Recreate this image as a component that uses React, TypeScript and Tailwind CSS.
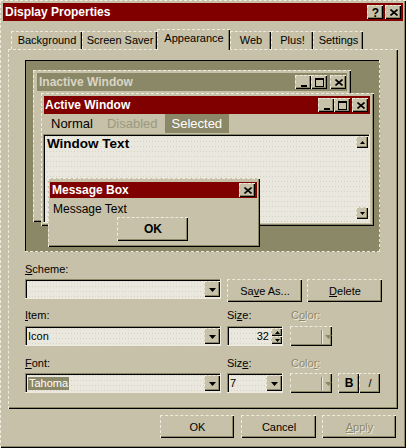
import type { ReactNode } from "react"

const FACE = "bg-[#c6c1a8]"
const RAISED =
  "border-t border-l border-dashed border-[#eeebdc] shadow-[inset_-1px_-1px_0_#000,inset_-2px_-2px_0_#8b8868]"
const SUNKEN =
  "border-r border-b border-dashed border-[#eeebdc] shadow-[inset_1px_1px_0_#8b8868,inset_2px_2px_0_#000]"
const FIELD =
  "bg-[#eae8de] bg-[radial-gradient(circle,#d6d3c2_0.6px,transparent_0.9px)] bg-[length:3px_5px]"

const tabs = [
  { label: "Background", w: "w-[71px]" },
  { label: "Screen Saver", w: "w-[75px]" },
  { label: "Appearance", w: "w-[73px]", active: true },
  { label: "Web", w: "w-[41px]" },
  { label: "Plus!", w: "w-[42px]" },
  { label: "Settings", w: "w-[50px]" },
]

function CloseGlyph() {
  return (
    <svg width="8" height="7" viewBox="0 0 8 7">
      <path d="M0.5 0.5l7 6M7.5 0.5l-7 6" stroke="#000" strokeWidth="1.6" />
    </svg>
  )
}

function MinGlyph() {
  return (
    <svg width="8" height="9" viewBox="0 0 8 9">
      <rect x="1" y="7" width="6" height="2" />
    </svg>
  )
}

function MaxGlyph() {
  return (
    <svg width="9" height="9" viewBox="0 0 9 9">
      <rect x="0.5" y="0.5" width="8" height="8" fill="none" stroke="#000" />
      <rect width="9" height="2" />
    </svg>
  )
}

function Arrow({ up, color = "#000", small }: { up?: boolean; color?: string; small?: boolean }) {
  if (small) {
    return (
      <svg width="5" height="3" viewBox="0 0 5 3">
        <path d={up ? "M0 3h5L2.5 0z" : "M0 0h5L2.5 3z"} fill={color} />
      </svg>
    )
  }
  return (
    <svg width="7" height="4" viewBox="0 0 7 4">
      <path d={up ? "M0 4h7L3.5 0z" : "M0 0h7L3.5 4z"} fill={color} />
    </svg>
  )
}

function CapBtn({ children }: { children: ReactNode }) {
  return (
    <div className={`w-4 h-[14px] ${FACE} ${RAISED} flex items-center justify-center`}>
      {children}
    </div>
  )
}

function ArrowBtn() {
  return (
    <div className={`w-4 h-4 ${FACE} ${RAISED} flex items-center justify-center`}>
      <Arrow />
    </div>
  )
}

function Combo({ className, children }: { className: string; children?: ReactNode }) {
  return (
    <div className={`${className} h-5 ${SUNKEN} ${FIELD} flex items-start pt-[2px]`}>
      <div className="flex-1 h-4 flex items-center pl-[3px] leading-[13px]">{children}</div>
      <ArrowBtn />
    </div>
  )
}

function ColorBtn() {
  return (
    <div className={`w-[42px] h-5 ml-[7px] ${FACE} ${RAISED} flex items-center`}>
      <div className="w-[30px]" />
      <div className="w-px h-[14px] bg-[#8b8868] shadow-[1px_0_0_#eeebdc]" />
      <div className="ml-[3px] flex items-center">
        <Arrow color="#8b8868" />
      </div>
    </div>
  )
}

function Btn({ className, children }: { className: string; children: ReactNode }) {
  return (
    <div className={`${className} ${FACE} ${RAISED} flex items-center justify-center leading-[13px]`}>
      {children}
    </div>
  )
}

function U({ children }: { children: ReactNode }) {
  return <span className="underline underline-offset-[1px]">{children}</span>
}

export default function App() {
  return (
    <div
      className={`w-[406px] h-[448px] ${FACE} ${RAISED} pt-[2px] pl-[2px] pr-[3px] pb-[3px] flex flex-col font-['Liberation_Sans',Arial,sans-serif] text-[11px] text-black`}
    >
      {/* title bar */}
      <div className="h-[18px] bg-[#800000] flex items-center justify-between pl-[2px] pr-[2px]">
        <span className="text-white font-bold text-[12px] leading-none">Display Properties</span>
        <div className="flex gap-[2px]">
          <CapBtn>
            <span className="font-bold text-[12px] leading-none">?</span>
          </CapBtn>
          <CapBtn>
            <CloseGlyph />
          </CapBtn>
        </div>
      </div>

      {/* tabs */}
      <div className="mt-2 h-5 pl-2 flex items-start relative z-10">
        {tabs.map((t) =>
          t.active ? (
            <div
              key={t.label}
              className={`${t.w} h-[21px] pb-[3px] ${FACE} border-t border-l border-dashed border-[#eeebdc] shadow-[inset_-1px_0_0_#000,inset_-2px_0_0_#8b8868] flex items-center justify-center leading-[13px]`}
            >
              {t.label}
            </div>
          ) : (
            <div
              key={t.label}
              className={`${t.w} mt-[2px] h-[18px] ${FACE} border-t border-l border-dashed border-[#eeebdc] shadow-[inset_-1px_0_0_#000,inset_-2px_0_0_#8b8868] flex items-center justify-center leading-[13px]`}
            >
              {t.label}
            </div>
          )
        )}
      </div>

      {/* tab panel */}
      <div className={`ml-[5px] w-[390px] h-[360px] ${RAISED} pl-4 pt-[10px] flex flex-col`}>
        {/* preview */}
        <div className="w-[355px] h-[192px] relative bg-[#8b8868] shadow-[inset_1px_1px_0_#000] border-r border-b border-dashed border-[#eeebdc]">
          {/* inactive window */}
          <div className={`absolute left-2 top-[10px] w-[318px] h-[152px] ${FACE} ${RAISED} pt-[2px] pl-[3px] pr-1`}>
            <div className="h-[18px] bg-[#8b8868] flex items-center justify-between pl-[2px] pr-px">
              <span className="text-[#d9d5c3] font-bold text-[12px] leading-none">Inactive Window</span>
              <div className="flex">
                <CapBtn>
                  <MinGlyph />
                </CapBtn>
                <CapBtn>
                  <MaxGlyph />
                </CapBtn>
                <div className="ml-[3px]">
                  <CapBtn>
                    <CloseGlyph />
                  </CapBtn>
                </div>
              </div>
            </div>
          </div>

          {/* active window */}
          <div className={`absolute left-4 top-[33px] w-[333px] h-[133px] ${FACE} ${RAISED} pt-[2px] pl-[2px] pr-1 flex flex-col`}>
            <div className="h-[18px] bg-[#800000] flex items-center justify-between pl-[1px] pr-[2px]">
              <span className="text-white font-bold text-[12px] leading-none">Active Window</span>
              <div className="flex">
                <CapBtn>
                  <MinGlyph />
                </CapBtn>
                <CapBtn>
                  <MaxGlyph />
                </CapBtn>
                <div className="ml-[2px]">
                  <CapBtn>
                    <CloseGlyph />
                  </CapBtn>
                </div>
              </div>
            </div>
            <div className="h-[19px] flex items-stretch text-[13px] leading-[19px]">
              <div className="px-[7px]">Normal</div>
              <div className="px-[7px] text-[#9c997f]">Disabled</div>
              <div className="px-[7px] bg-[#8b8868] text-white">Selected</div>
            </div>
            <div className={`-ml-px mt-px w-[327px] h-[89px] ${SUNKEN} ${FIELD} flex pt-[2px] pb-[3px] pl-1 pr-px`}>
              <div className="flex-1 font-bold text-[13.5px] leading-[16px]">Window Text</div>
              <div className="w-3 flex flex-col justify-between">
                <div className={`w-3 h-3 ${FACE} ${RAISED} flex items-center justify-center`}>
                  <Arrow up small />
                </div>
                <div className={`w-3 h-3 ${FACE} ${RAISED} flex items-center justify-center`}>
                  <Arrow small />
                </div>
              </div>
            </div>
          </div>

          {/* message box */}
          <div className={`absolute left-[23px] top-[118px] w-[212px] h-[69px] ${FACE} ${RAISED} pt-[3px] pl-px pr-[3px] flex flex-col`}>
            <div className="h-4 bg-[#800000] flex items-center justify-between pl-[2px] pr-[2px]">
              <span className="text-white font-bold text-[12px] leading-none">Message Box</span>
              <CapBtn>
                <CloseGlyph />
              </CapBtn>
            </div>
            <div className="mt-[4px] pl-[3px] text-[12px] leading-[14px]">Message Text</div>
            <Btn className="ml-[67px] mt-px w-[71px] h-6 font-bold text-[12px]">OK</Btn>
          </div>
        </div>

        {/* scheme */}
        <div className="mt-[11px] h-[13px] leading-[13px]">
          <U>S</U>cheme:
        </div>
        <div className="mt-[3px] flex items-start">
          <Combo className="w-[196px]" />
          <Btn className="ml-[6px] w-[75px] h-[23px]">
            Sa<U>v</U>e As...
          </Btn>
          <Btn className="ml-[5px] w-[75px] h-[23px]">
            <U>D</U>elete
          </Btn>
        </div>

        {/* item */}
        <div className="mt-[7px] h-[13px] leading-[13px] flex">
          <div className="w-[202px]">
            <U>I</U>tem:
          </div>
          <div className="w-[64px]">
            Si<U>z</U>e:
          </div>
          <div className="text-[#8b8868] [text-shadow:1px_1px_0_#eeebdc]">
            C<U>o</U>lor:
          </div>
        </div>
        <div className="mt-1 flex items-start">
          <Combo className="w-[196px]">Icon</Combo>
          <div className={`ml-[6px] w-[56px] h-5 ${SUNKEN} ${FIELD} flex items-start pt-[2px]`}>
            <div className="flex-1 h-4 flex items-center justify-end pr-[2px] leading-[13px]">32</div>
            <div className="w-[11px] flex flex-col">
              <div className={`h-2 ${FACE} ${RAISED} flex items-center justify-center`}>
                <Arrow up small />
              </div>
              <div className={`h-2 ${FACE} ${RAISED} flex items-center justify-center`}>
                <Arrow small />
              </div>
            </div>
          </div>
          <ColorBtn />
        </div>

        {/* font */}
        <div className="mt-[11px] h-[13px] leading-[13px] flex">
          <div className="w-[202px]">
            <U>F</U>ont:
          </div>
          <div className="w-[64px]">
            Siz<U>e</U>:
          </div>
          <div className="text-[#8b8868] [text-shadow:1px_1px_0_#eeebdc]">
            Colo<U>r</U>:
          </div>
        </div>
        <div className="mt-[3px] flex items-start">
          <Combo className="w-[196px]">
            <span className="bg-[#8b8868] text-white px-px">Tahoma</span>
          </Combo>
          <Combo className="ml-[6px] w-[56px]">7</Combo>
          <ColorBtn />
          <Btn className="ml-[6px] w-[21px] h-5 font-bold text-[12px]">B</Btn>
          <Btn className="w-[21px] h-5">/</Btn>
        </div>
      </div>

      {/* dialog buttons */}
      <div className="mt-[6px] pr-[7px] flex justify-end">
        <Btn className="w-[74px] h-[23px]">OK</Btn>
        <Btn className="ml-[7px] w-[75px] h-[23px]">Cancel</Btn>
        <Btn className="ml-[6px] w-[74px] h-[23px] text-[#8b8868] [text-shadow:1px_1px_0_#eeebdc]">
          <U>A</U>pply
        </Btn>
      </div>
    </div>
  )
}
